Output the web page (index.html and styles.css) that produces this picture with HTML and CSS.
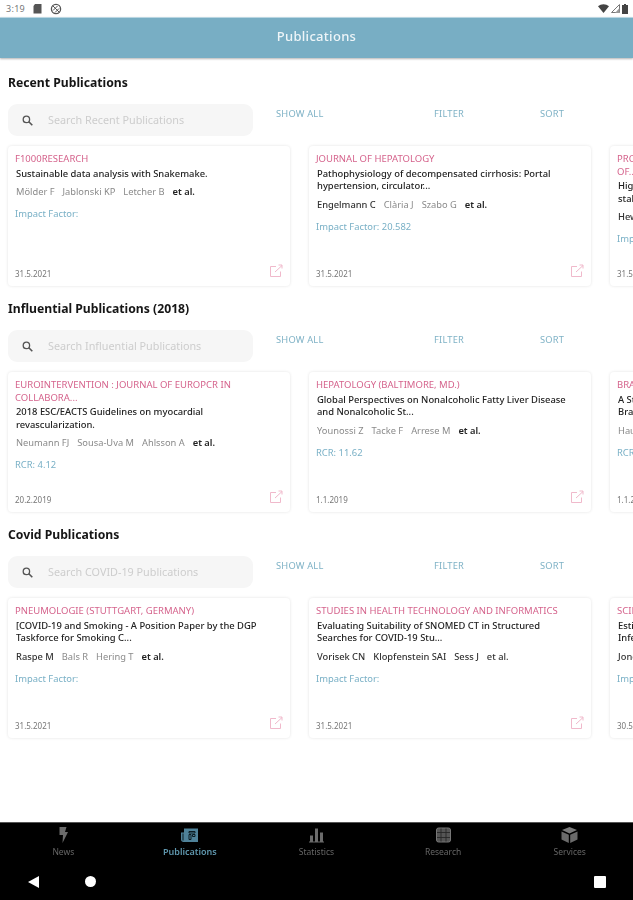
FILE: index.html
```html
<!DOCTYPE html>
<html lang="en">
<head>
    <meta charset="UTF-8">
    <meta name="viewport" content="width=device-width, initial-scale=1.0">
    <title>Publications</title>
    <link rel="stylesheet" href="styles.css">
</head>
<body>
    <svg class="sprites" width="0" height="0">
        <symbol id="ext" viewBox="0 0 14 14"><path d="M7 2.500H1.500v10h10V7.500M6 8l7-6.500M9.500 1H13v3.500" fill="none" stroke="currentColor" stroke-width="1"/></symbol>
    </svg>

    <div class="status-bar">
        <div class="status-left">
            <span class="clock">3:19</span>
            <svg width="9" height="11" viewBox="0 0 9 11"><path d="M2 1h6.500v9.500H.5V3z" fill="#555"/></svg>
            <svg width="12" height="12" viewBox="0 0 12 12"><circle cx="6" cy="6" r="4.600" fill="none" stroke="#555" stroke-width="1.300"/><path d="M2.800 2.800l6.400 6.400M3 7.500L7.500 3M5 9.500l4-4" stroke="#555" stroke-width="1"/></svg>
        </div>
        <div class="status-right">
            <svg width="11" height="9" viewBox="0 0 11 9"><path d="M0 2.200C3-.5 8-.5 11 2.200L5.500 9z" fill="#444"/></svg>
            <svg width="9" height="9" viewBox="0 0 9 9"><path d="M8.500.5v8H.5z" fill="none" stroke="#777"/><path d="M8.500 4v5H4z" fill="#999"/></svg>
            <svg width="6" height="10" viewBox="0 0 6 10"><path d="M2 0h2v1h2v9H0V1h2z" fill="#444"/></svg>
        </div>
    </div>

    <header class="app-bar">Publications</header>

    <main class="content">

        <section class="pub-section">
            <h2>Recent Publications</h2>
            <div class="tools">
                <div class="search">
                    <svg width="11" height="11" viewBox="0 0 11 11"><circle cx="4.400" cy="4.400" r="3.200" fill="none" stroke="#555" stroke-width="1.300"/><path d="M6.800 6.800L10.300 10.300" stroke="#555" stroke-width="1.600"/></svg>
                    <span>Search Recent Publications</span>
                </div>
                <a class="act act-show">SHOW ALL</a>
                <a class="act act-filter">FILTER</a>
                <a class="act act-sort">SORT</a>
            </div>
            <div class="cards">
                <article class="card">
                    <div class="journal">F1000RESEARCH</div>
                    <div class="title">Sustainable data analysis with Snakemake.</div>
                    <div class="authors"><span>Mölder F</span><span>Jablonski KP</span><span>Letcher B</span><b>et al.</b></div>
                    <div class="metric">Impact Factor:</div>
                    <div class="foot"><span>31.5.2021</span><svg class="ext"><use href="#ext"/></svg></div>
                </article>
                <article class="card">
                    <div class="journal">JOURNAL OF HEPATOLOGY</div>
                    <div class="title">Pathophysiology of decompensated cirrhosis: Portal<br>hypertension, circulator...</div>
                    <div class="authors"><span class="hi">Engelmann C</span><span>Clària J</span><span>Szabo G</span><b>et al.</b></div>
                    <div class="metric">Impact Factor: 20.582</div>
                    <div class="foot"><span>31.5.2021</span><svg class="ext"><use href="#ext"/></svg></div>
                </article>
                <article class="card">
                    <div class="journal">PROCEEDINGS OF THE NATIONAL ACADEMY OF SCIENCES<br>OF...</div>
                    <div class="title">High-resolution analysis of the human genome and its<br>stable...</div>
                    <div class="authors"><span class="hi">Hewitt</span></div>
                    <div class="metric">Impact Factor:</div>
                    <div class="foot"><span>31.5.2021</span></div>
                </article>
            </div>
        </section>

        <section class="pub-section">
            <h2>Influential Publications (2018)</h2>
            <div class="tools">
                <div class="search">
                    <svg width="11" height="11" viewBox="0 0 11 11"><circle cx="4.400" cy="4.400" r="3.200" fill="none" stroke="#555" stroke-width="1.300"/><path d="M6.800 6.800L10.300 10.300" stroke="#555" stroke-width="1.600"/></svg>
                    <span>Search Influential Publications</span>
                </div>
                <a class="act act-show">SHOW ALL</a>
                <a class="act act-filter">FILTER</a>
                <a class="act act-sort">SORT</a>
            </div>
            <div class="cards">
                <article class="card">
                    <div class="journal">EUROINTERVENTION : JOURNAL OF EUROPCR IN<br>COLLABORA...</div>
                    <div class="title">2018 ESC/EACTS Guidelines on myocardial<br>revascularization.</div>
                    <div class="authors"><span>Neumann FJ</span><span>Sousa-Uva M</span><span>Ahlsson A</span><b>et al.</b></div>
                    <div class="metric">RCR: 4.12</div>
                    <div class="foot"><span>20.2.2019</span><svg class="ext"><use href="#ext"/></svg></div>
                </article>
                <article class="card">
                    <div class="journal">HEPATOLOGY (BALTIMORE, MD.)</div>
                    <div class="title">Global Perspectives on Nonalcoholic Fatty Liver Disease<br>and Nonalcoholic St...</div>
                    <div class="authors"><span>Younossi Z</span><span>Tacke F</span><span>Arrese M</span><b>et al.</b></div>
                    <div class="metric">RCR: 11.62</div>
                    <div class="foot"><span>1.1.2019</span><svg class="ext"><use href="#ext"/></svg></div>
                </article>
                <article class="card">
                    <div class="journal">BRAIN</div>
                    <div class="title">A Standardized Approach to Assessing the Severity of<br>Brain...</div>
                    <div class="authors"><span>Hausmann</span></div>
                    <div class="metric">RCR: 3.10</div>
                    <div class="foot"><span>1.1.2019</span></div>
                </article>
            </div>
        </section>

        <section class="pub-section">
            <h2>Covid Publications</h2>
            <div class="tools">
                <div class="search">
                    <svg width="11" height="11" viewBox="0 0 11 11"><circle cx="4.400" cy="4.400" r="3.200" fill="none" stroke="#555" stroke-width="1.300"/><path d="M6.800 6.800L10.300 10.300" stroke="#555" stroke-width="1.600"/></svg>
                    <span>Search COVID-19 Publications</span>
                </div>
                <a class="act act-show">SHOW ALL</a>
                <a class="act act-filter">FILTER</a>
                <a class="act act-sort">SORT</a>
            </div>
            <div class="cards">
                <article class="card">
                    <div class="journal">PNEUMOLOGIE (STUTTGART, GERMANY)</div>
                    <div class="title">[COVID-19 and Smoking - A Position Paper by the DGP<br>Taskforce for Smoking C...</div>
                    <div class="authors"><span class="hi">Raspe M</span><span>Bals R</span><span>Hering T</span><b>et al.</b></div>
                    <div class="metric">Impact Factor:</div>
                    <div class="foot"><span>31.5.2021</span><svg class="ext"><use href="#ext"/></svg></div>
                </article>
                <article class="card">
                    <div class="journal">STUDIES IN HEALTH TECHNOLOGY AND INFORMATICS</div>
                    <div class="title">Evaluating Suitability of SNOMED CT in Structured<br>Searches for COVID-19 Stu...</div>
                    <div class="authors"><span class="hi">Vorisek CN</span><span class="hi">Klopfenstein SAI</span><span class="hi">Sess J</span><span class="hi">et al.</span></div>
                    <div class="metric">Impact Factor:</div>
                    <div class="foot"><span>31.5.2021</span><svg class="ext"><use href="#ext"/></svg></div>
                </article>
                <article class="card">
                    <div class="journal">SCIENCE</div>
                    <div class="title">Estimating the effects of non-pharmaceutical<br>Infections...</div>
                    <div class="authors"><span class="hi">Jones</span></div>
                    <div class="metric">Impact Factor:</div>
                    <div class="foot"><span>30.5.2021</span></div>
                </article>
            </div>
        </section>

    </main>

    <nav class="tabs">
        <div class="tab">
            <svg width="10" height="16" viewBox="0 0 10 16"><path d="M1.500 0h7L7 5h3L4.500 16 5 8H1.500z" fill="#6b6b6b"/></svg>
            <span>News</span>
        </div>
        <div class="tab active">
            <svg width="17" height="15" viewBox="0 0 17 15"><path d="M3 1h14v13.500H2.500C1 14.500 0 13.500 0 12V5h3z" fill="#4f8299"/><path d="M8 4h6v1.500H8zM8 7h2v5H8zM11.500 7H14v2h-2.500zM2 6v7" stroke="#0c1c22" stroke-width="1" fill="none"/></svg>
            <span>Publications</span>
        </div>
        <div class="tab">
            <svg width="15" height="15" viewBox="0 0 15 15"><path d="M0 14h15v1H0zM1 8h3v6H1zM6 1h3v13H6zM11 5h3v9h-3z" fill="#6b6b6b"/></svg>
            <span>Statistics</span>
        </div>
        <div class="tab">
            <svg width="15" height="15" viewBox="0 0 15 15"><rect x=".5" y=".5" width="14" height="14" rx="2" fill="#555" stroke="#777"/><path d="M5 1v13M10 1v13M1 5h13M1 10h13" stroke="#222" stroke-width=".8"/></svg>
            <span>Research</span>
        </div>
        <div class="tab">
            <svg width="17" height="16" viewBox="0 0 17 16"><path d="M8.500 0L16 3 8.500 6.500 1 3z" fill="#7a7a7a"/><path d="M.5 4.500l7.300 3.300V16L.5 12.500zM16.500 4.500L9.200 7.800V16l7.300-3.500z" fill="#6b6b6b"/></svg>
            <span>Services</span>
        </div>
    </nav>

    <div class="system-nav">
        <span class="sys-back"></span>
        <span class="sys-home"></span>
        <span class="sys-recent"></span>
    </div>
</body>
</html>
```

FILE: styles.css
```css
* {
    box-sizing: border-box;
}

html, body {
    margin: 0;
    padding: 0;
}

body {
    width: 633px;
    height: 900px;
    overflow: hidden;
    display: flex;
    flex-direction: column;
    font-family: "Noto Sans", "Open Sans", sans-serif;
    background: #fff;
    color: #222;
    filter: blur(0.4px); /* the reference is a soft upscaled capture */
}

.sprites {
    position: absolute;
}

/* status bar */
.status-bar {
    height: 17px;
    flex: none;
    display: flex;
    justify-content: space-between;
    align-items: center;
    padding: 0 5px 0 6px;
    background: #fff;
}

.status-left, .status-right {
    display: flex;
    align-items: center;
}

.status-left {
    gap: 8px;
}

.status-right {
    gap: 2px;
}

.clock {
    font-size: 9px;
    color: #777;
    letter-spacing: .3px;
}

/* top bar */
.app-bar {
    height: 41px;
    flex: none;
    display: flex;
    align-items: center;
    justify-content: center;
    padding-bottom: 4px;
    background: #78aec4;
    color: #eef5f8;
    font-size: 13px;
    font-weight: 500;
    letter-spacing: .3px;
    box-shadow: 0 1px 2px rgba(0,0,0,0.3);
    border-top: 1px solid #b9d6e2;
}

.content {
    flex: 1;
    padding-top: 16px;
}

/* one block of publications */
.pub-section {
    height: 226px;
    padding-left: 8px;
}

.pub-section h2 {
    margin: 0;
    height: 20px;
    line-height: 18px;
    font-size: 12.2px;
    font-weight: 700;
    color: #161616;
}

.tools {
    height: 32px;
    margin-top: 10px;
    display: flex;
    align-items: flex-start;
}

.search {
    width: 245px;
    height: 32px;
    flex: none;
    display: flex;
    align-items: center;
    gap: 15px;
    padding-left: 14px;
    background: #f6f6f6;
    border-radius: 9px;
    font-size: 10.8px;
    color: #cdcdcd;
}

.search span {
    margin-top: -1px;
}

.act {
    flex: none;
    margin-top: 3px;
    font-size: 9.3px;
    line-height: 14px;
    letter-spacing: .2px;
    color: #7fb2c6;
}

.act-show {
    margin-left: 23px;
    width: 158px;
}

.act-filter {
    width: 106px;
}

.cards {
    display: flex;
    gap: 19px;
    margin-top: 10px;
    height: 140px;
}

.card {
    width: 282px;
    flex: none;
    display: flex;
    flex-direction: column;
    padding: 7px;
    border-radius: 4px;
    background: #fff;
    box-shadow: 0 0 3px rgba(0,0,0,0.12);
}

.journal {
    font-size: 9.5px;
    line-height: 12.5px;
    color: #d5638c;
}

.title {
    margin-top: 2px;
    padding-left: 1px;
    white-space: nowrap;
    font-size: 9.4px;
    line-height: 12.5px;
    font-weight: 500;
    color: #222;
}

.authors {
    margin-top: 6px;
    padding-left: 1px;
    display: flex;
    gap: 8px;
    font-size: 9.3px;
    line-height: 12px;
    color: #8a8a8a;
}

.authors .hi {
    color: #333;
    font-weight: 500;
}

.authors b {
    color: #222;
    font-weight: 600;
}

.metric {
    margin-top: 10px;
    font-size: 9.4px;
    line-height: 12px;
    color: #79b0c6;
}

.foot {
    margin-top: auto;
    display: flex;
    justify-content: space-between;
    align-items: flex-end;
    font-size: 8px;
    line-height: 11px;
    color: #777;
}

.ext {
    width: 14px;
    height: 14px;
    margin-bottom: 1px;
    color: #f0b9cb;
}

/* bottom tabs */
.tabs {
    height: 46px;
    flex: none;
    display: grid;
    grid-template-columns: repeat(5, 1fr);
    background: #000;
    border-top: 1px solid #555;
}

.tab {
    display: flex;
    flex-direction: column;
    align-items: center;
    padding-top: 4px;
    font-size: 8.5px;
    line-height: 12px;
    color: #666;
}

.tab svg {
    height: 16px;
    margin-bottom: 3px;
}

.tab.active {
    color: #5f97ae;
    font-size: 9px;
    font-weight: 600;
}

.system-nav {
    height: 32px;
    flex: none;
    display: flex;
    align-items: center;
    background: #000;
    padding-bottom: 5px;
}

.sys-back {
    margin-left: 28px;
    width: 0;
    height: 0;
    border-style: solid;
    border-width: 6px 11px 6px 0;
    border-color: transparent #fff transparent transparent;
}

.sys-home {
    margin-left: 46px;
    width: 11px;
    height: 11px;
    border-radius: 50%;
    background: #fff;
}

.sys-recent {
    margin-left: 498px;
    width: 12px;
    height: 12px;
    border-radius: 1px;
    background: #fff;
}
```
